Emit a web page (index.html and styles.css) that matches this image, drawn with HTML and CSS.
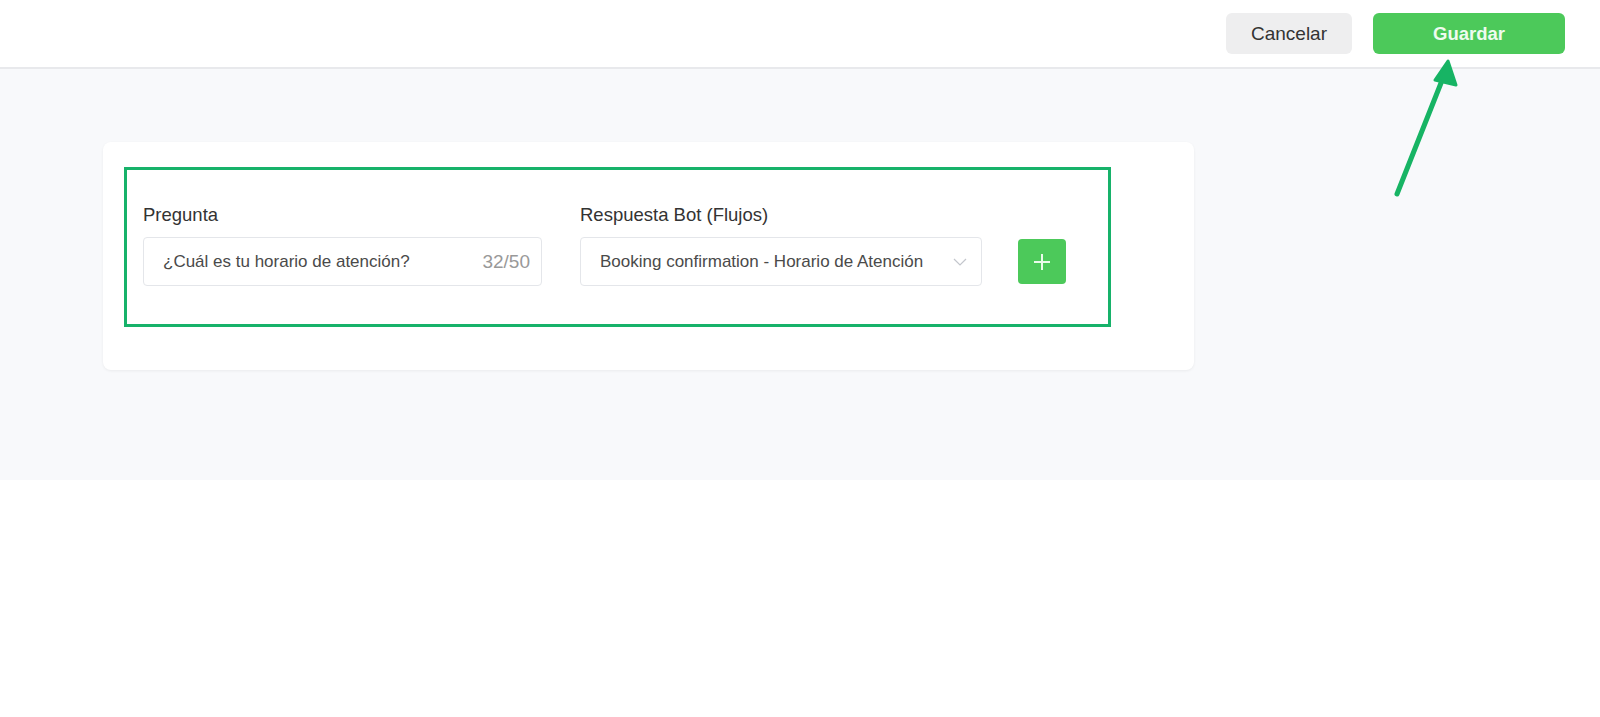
FILE: index.html
```html
<!DOCTYPE html>
<html lang="es">
<head>
<meta charset="utf-8">
<link rel="stylesheet" href="styles.css">
</head>
<body>
<header class="topbar">
  <button class="btn btn-cancel">Cancelar</button>
  <button class="btn btn-save">Guardar</button>
</header>
<main class="content">
  <section class="card">
    <div class="highlight">
      <div class="row">
        <div class="field field-q">
          <label class="label">Pregunta</label>
          <div class="input">
            <span class="input-text">¿Cuál es tu horario de atención?</span>
            <span class="counter">32/50</span>
          </div>
        </div>
        <div class="field field-r">
          <label class="label">Respuesta Bot (Flujos)</label>
          <div class="input select">
            <span class="input-text">Booking confirmation - Horario de Atención</span>
            <svg class="chevron" width="14" height="8" viewBox="0 0 14 8"><path d="M1 1 L7 7 L13 1" fill="none" stroke="#c3c6cc" stroke-width="1.2"/></svg>
          </div>
        </div>
        <button class="add-btn" aria-label="Agregar">
          <svg width="18" height="18" viewBox="0 0 18 18"><path d="M9 1 V17 M1 9 H17" stroke="#eafbea" stroke-width="2"/></svg>
        </button>
      </div>
    </div>
  </section>
</main>
<svg class="arrow" width="90" height="160" viewBox="0 0 90 160">
  <line x1="19" y1="142" x2="65" y2="26" stroke="#17b464" stroke-width="5" stroke-linecap="round"/>
  <polygon points="70,9 78,33 57,28" fill="#17b464" stroke="#17b464" stroke-width="3" stroke-linejoin="round"/>
</svg>
</body>
</html>
```
FILE: styles.css
```css
* { box-sizing: border-box; }
html, body { margin: 0; padding: 0; background: #fff; }
body {
  font-family: "Liberation Sans", Arial, sans-serif;
  color: #333;
  position: relative;
  height: 717px;
}
.topbar {
  height: 69px;
  border-bottom: 2px solid #e8e9ec;
  display: flex;
  justify-content: flex-end;
  align-items: flex-start;
  padding: 13px 35px 0 0;
  gap: 21px;
}
.btn {
  font-family: inherit;
  font-size: 19px;
  border: none;
  border-radius: 6px;
  height: 41px;
  cursor: pointer;
}
.btn-cancel {
  width: 126px;
  background: #eeeeef;
  color: #333;
}
.btn-save {
  width: 192px;
  background: #4cc95a;
  color: #eefbef;
  font-weight: 600;
  font-size: 18.5px;
}
.content {
  background: #f8f9fb;
  height: 411px;
  padding: 73px 0 0 103px;
}
.card {
  width: 1091px;
  height: 228px;
  background: #fff;
  border-radius: 8px;
  box-shadow: 0 1px 3px rgba(0,0,0,0.06);
  padding: 25px 0 0 21px;
}
.highlight {
  width: 987px;
  height: 160px;
  border: 3px solid #17b26a;
  padding: 34px 0 0 16px;
}
.row {
  display: flex;
  align-items: flex-end;
}
.field { display: flex; flex-direction: column; }
.field-q { width: 399px; }
.field-r { width: 402px; margin-left: 38px; }
.label {
  font-size: 18.5px;
  color: #333;
  line-height: 22px;
  margin-bottom: 11px;
}
.input {
  height: 49px;
  border: 1px solid #e4e6ea;
  border-radius: 4px;
  display: flex;
  align-items: center;
  justify-content: space-between;
  padding: 0 11px 0 19px;
  font-size: 17px;
}
.input-text { color: #4a4a4a; }
.counter { color: #999; font-size: 19px; }
.select { padding-right: 14px; }
.chevron { display: block; margin-top: 1px; }
.add-btn {
  width: 48px;
  height: 45px;
  margin: 0 0 2px 36px;
  border: none;
  border-radius: 4px;
  background: #4cc95a;
  display: flex;
  align-items: center;
  justify-content: center;
  padding: 0;
}
.add-btn svg { display: block; }
.arrow {
  position: absolute;
  left: 1378px;
  top: 52px;
}
```
